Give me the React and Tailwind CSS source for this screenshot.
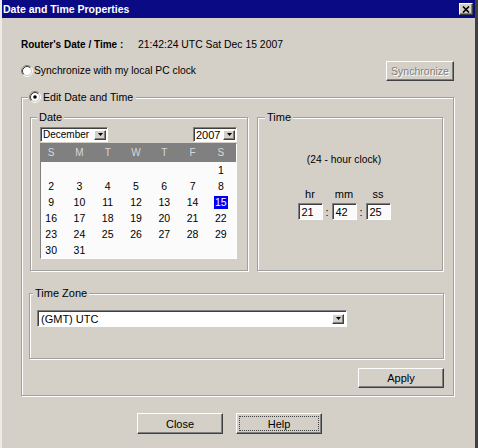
import React from "react";

const Radio = ({ checked }) => (
  <svg width="12" height="12" viewBox="0 0 12 12" className="shrink-0">
    <circle cx="6" cy="6" r="4" fill="#fff" />
    <path d="M9.89 2.11 A5.5 5.5 0 0 0 2.11 9.89" fill="none" stroke="#808080" />
    <path d="M2.11 9.89 A5.5 5.5 0 0 0 9.89 2.11" fill="none" stroke="#ffffff" />
    <path d="M9.18 2.82 A4.5 4.5 0 0 0 2.82 9.18" fill="none" stroke="#404040" />
    <path d="M2.82 9.18 A4.5 4.5 0 0 0 9.18 2.82" fill="none" stroke="#d4d0c8" />
    {checked && <circle cx="6" cy="6" r="1.8" fill="#000" />}
  </svg>
);

const Arrow = () => (
  <div className="w-[12px] h-[10px] bg-[#d4d0c8] border border-t-white border-l-white border-b-[#404040] border-r-[#404040] shadow-[inset_-1px_-1px_0_#808080] flex items-center justify-center shrink-0">
    <svg width="5" height="3" viewBox="0 0 5 3">
      <path d="M0 0H5L2.5 3Z" fill="#000" />
    </svg>
  </div>
);

const Group = ({ label, className, legendClass, children }) => (
  <div
    className={`relative border border-[#a0a0a0] shadow-[inset_1px_1px_0_#fff,1px_1px_0_#fff] shrink-0 ${className}`}
  >
    <div className={`absolute top-[-7px] bg-[#d4d0c8] leading-[12px] flex items-center ${legendClass}`}>
      {label}
    </div>
    {children}
  </div>
);

const btn =
  "bg-[#d4d0c8] border border-t-white border-l-white border-b-[#404040] border-r-[#404040] shadow-[inset_-1px_-1px_0_#808080] flex items-center justify-center shrink-0";

const sunken =
  "border border-t-[#808080] border-l-[#808080] border-b-white border-r-white shadow-[inset_1px_1px_0_#404040]";

const weeks = [
  [null, null, null, null, null, null, 1],
  [2, 3, 4, 5, 6, 7, 8],
  [9, 10, 11, 12, 13, 14, 15],
  [16, 17, 18, 19, 20, 21, 22],
  [23, 24, 25, 26, 27, 28, 29],
  [30, 31, null, null, null, null, null],
];

const TimeField = ({ label, value }) => (
  <div className="flex flex-col items-center">
    <div className="h-[12px] leading-[12px] text-[11px]">{label}</div>
    <div className={`mt-[3px] w-[25px] h-[17px] bg-[#fafafa] ${sunken} flex items-center pl-[3px] text-[11px]`}>
      {value}
    </div>
  </div>
);

export default function App() {
  return (
    <div className="w-[478px] h-[448px] bg-[#d4d0c8] border-l-2 border-l-[#ecebe6] border-r-[3px] border-r-[#404040] font-['Liberation_Sans',Arial,sans-serif] text-[10px] leading-[12px] text-black flex flex-col overflow-hidden">
      {/* Title bar */}
      <div className="h-[18px] bg-[#0a0a84] flex items-center pl-[1px] pr-[2px] shrink-0">
        <span className="text-white font-bold text-[10.5px] leading-[12px]">Date and Time Properties</span>
        <div className={`ml-auto w-[14px] h-[12px] ${btn}`}>
          <svg width="8" height="7" viewBox="0 0 8 7">
            <path d="M1 0.5L7 6.5M7 0.5L1 6.5" stroke="#000" strokeWidth="1.6" />
          </svg>
        </div>
      </div>

      <div className="flex flex-col pl-[19px] pr-[21px]">
        {/* Router's date */}
        <div className="mt-[21px] h-[12px] flex items-center">
          <span className="w-[117px] font-bold">Router's Date / Time :</span>
          <span className="text-[10.4px]">21:42:24 UTC Sat Dec 15 2007</span>
        </div>

        {/* Sync row */}
        <div className="mt-[10px] h-[20px] flex items-center">
          <Radio checked={false} />
          <span className="ml-[1px] text-[10.3px]">Synchronize with my local PC clock</span>
          <div className={`ml-auto w-[68px] h-[20px] ${btn} text-[#808080] [text-shadow:1px_1px_0_#fff] text-[10.5px]`}>
            Synchronize
          </div>
        </div>

        {/* Edit date and time group */}
        <Group
          className="mt-[16px] w-[433px] h-[299px] pl-[8px] pt-[19px] flex flex-col"
          legendClass="left-[6px] pl-[1px] pr-[3px] gap-[2px] text-[10.6px]"
          label={
            <>
              <Radio checked={true} />
              <span>Edit Date and Time</span>
            </>
          }
        >
          <div className="flex gap-[9px]">
            {/* Date */}
            <Group
              className="w-[218px] h-[154px] pl-[9px] pt-[9px] flex flex-col"
              legendClass="left-[6px] px-[2px] text-[11px]"
              label="Date"
            >
              <div className="w-[197px] flex justify-between">
                <div className={`w-[68px] h-[15px] bg-white ${sunken} flex items-center pl-[2px] pr-[1px]`}>
                  <span className="flex-1">December</span>
                  <Arrow />
                </div>
                <div className={`w-[44px] h-[15px] bg-white ${sunken} flex items-center pl-[2px] pr-[1px] text-[11px]`}>
                  <span className="flex-1">2007</span>
                  <Arrow />
                </div>
              </div>
              <div className="mt-[1px] w-[197px] h-[116px] border border-t-[#808080] border-l-[#808080] border-b-white border-r-white bg-[#fbfbfb] overflow-hidden flex flex-col">
                <div className="h-[18px] bg-[#808080] shrink-0">
                  <div className="ml-[-4px] w-[198px] h-full grid grid-cols-7 items-center text-[#d8d8d8]">
                    {["S", "M", "T", "W", "T", "F", "S"].map((d, i) => (
                      <div key={i} className="text-center">{d}</div>
                    ))}
                  </div>
                </div>
                <div className="ml-[-4px] w-[198px] flex flex-col">
                  {weeks.map((w, wi) => (
                    <div key={wi} className="h-[16px] grid grid-cols-7 items-center">
                      {w.map((d, di) => (
                        <div key={di} className="text-center text-[10.5px] leading-[13px]">
                          {d === 15 ? (
                            <span className="inline-block bg-[#0000ee] text-white px-px">15</span>
                          ) : (
                            d ?? ""
                          )}
                        </div>
                      ))}
                    </div>
                  ))}
                </div>
              </div>
            </Group>

            {/* Time */}
            <Group
              className="w-[186px] h-[154px] pt-[36px] pr-[12px] flex flex-col items-center"
              legendClass="left-[7px] px-[2px] text-[11px]"
              label="Time"
            >
              <div className="h-[12px] text-[10.3px]">(24 - hour clock)</div>
              <div className="mt-[22px] flex items-end">
                <TimeField label="hr" value="21" />
                <div className="w-[9px] h-[17px] flex items-center justify-center text-[11px]">:</div>
                <TimeField label="mm" value="42" />
                <div className="w-[9px] h-[17px] flex items-center justify-center text-[11px]">:</div>
                <TimeField label="ss" value="25" />
              </div>
            </Group>
          </div>

          {/* Time zone */}
          <Group
            className="mt-[22px] ml-[-1px] w-[415px] h-[66px] pl-[7px] pt-[16px]"
            legendClass="left-[3px] px-[2px] text-[11px]"
            label="Time Zone"
          >
            <div className={`w-[310px] h-[17px] bg-white ${sunken} flex items-center pl-[3px] pr-[2px] text-[11px]`}>
              <span className="flex-1">(GMT) UTC</span>
              <Arrow />
            </div>
          </Group>

          <div className={`mt-[9px] ml-[328px] w-[86px] h-[20px] ${btn} text-[11px]`}>Apply</div>
        </Group>

        {/* Bottom buttons */}
        <div className="mt-[17px] ml-[116px] flex gap-[13px]">
          <div className={`w-[86px] h-[21px] ${btn} text-[11px]`}>Close</div>
          <div className={`w-[86px] h-[21px] ${btn} text-[11px] relative`}>
            <div className="absolute inset-[2px] border border-dotted border-[#404040]" />
            Help
          </div>
        </div>
      </div>
    </div>
  );
}
